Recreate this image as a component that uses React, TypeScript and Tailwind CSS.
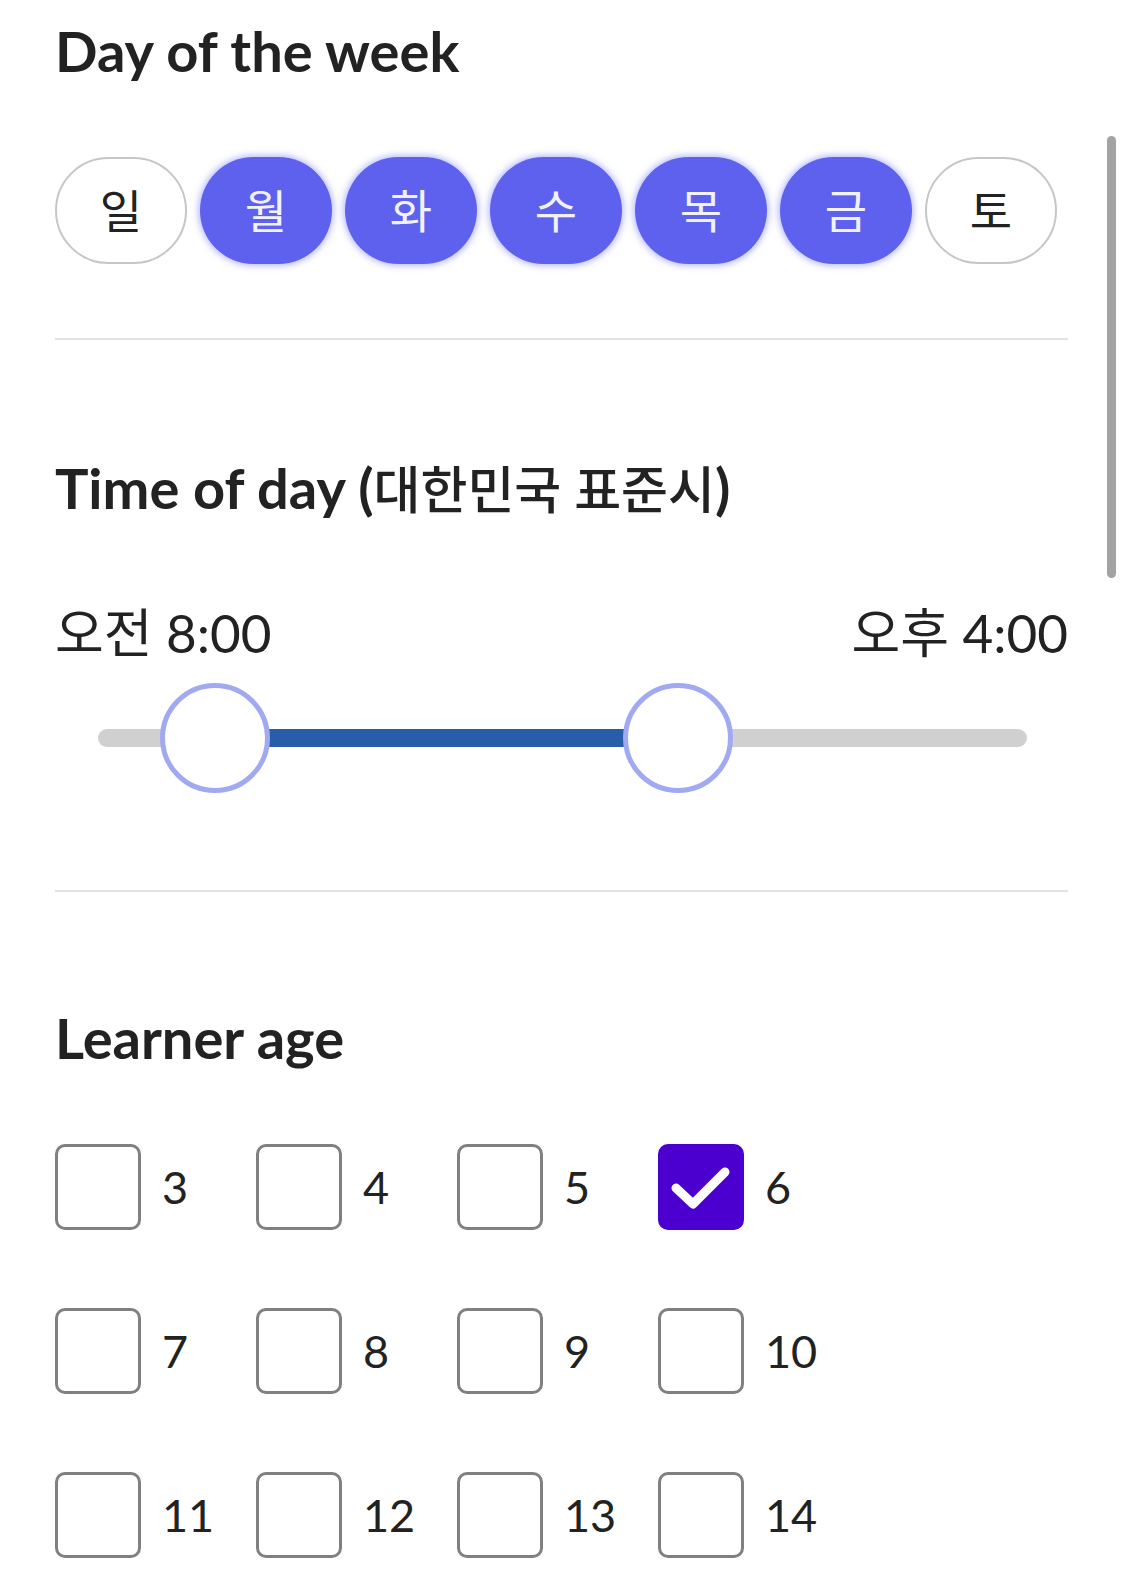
import React from "react";

const font = { fontFamily: '"Lato", "Noto Sans CJK KR", sans-serif' };

const days = [
  { d: "일", on: false },
  { d: "월", on: true },
  { d: "화", on: true },
  { d: "수", on: true },
  { d: "목", on: true },
  { d: "금", on: true },
  { d: "토", on: false },
];

const ages = [3, 4, 5, 6, 7, 8, 9, 10, 11, 12, 13, 14];

function Check({ checked }: { checked: boolean }) {
  if (checked) {
    return (
      <div className="w-[86px] h-[86px] rounded-[10px] bg-[#4b00cf] shrink-0">
        <svg width="86" height="86" viewBox="0 0 86 86">
          <path d="M18 44 L35 60 L67 28" fill="none" stroke="white" strokeWidth="9" strokeLinecap="round" strokeLinejoin="round" />
        </svg>
      </div>
    );
  }
  return <div className="w-[86px] h-[86px] rounded-[10px] border-[3px] border-[#808080] bg-white shrink-0" />;
}

export default function App() {
  return (
    <div className="relative w-[1125px] h-[1575px] bg-white overflow-hidden text-[#222222]" style={font}>
      <div className="pl-[55px] pr-[57px] pt-[23px]">
        <h2 className="text-[56px] font-bold leading-none">Day of the week</h2>

        <div className="mt-[78px] flex gap-[13px]">
          {days.map((x) =>
            x.on ? (
              <div
                key={x.d}
                className="w-[132px] h-[107px] rounded-full bg-[#5e61ee] shadow-[0_0_6px_2px_rgba(130,135,255,0.55)] flex items-center justify-center text-[46px] text-[#f2f2ff]"
              >
                {x.d}
              </div>
            ) : (
              <div
                key={x.d}
                className="w-[132px] h-[107px] rounded-full border-2 border-[#c6c6c6] bg-white flex items-center justify-center text-[46px] text-[#222222]"
              >
                {x.d}
              </div>
            )
          )}
        </div>

        <div className="mt-[74px] h-[2px] bg-[#e3e3e3]" />

        <h2 className="mt-[120px] text-[56px] font-bold leading-none">
          Time of day (<span className="font-medium text-[51px]">대한민국 표준시</span>)
        </h2>

        <div className="mt-[90px] flex justify-between text-[53px] leading-none">
          <span>오전 8:00</span>
          <span>오후 4:00</span>
        </div>

        <div className="mt-[24px] h-[110px] flex items-center pl-[43px] pr-[41px]">
          <div className="relative w-full h-[18px] rounded-full bg-[#d0d0d0]">
            <div className="absolute top-0 bottom-0 left-[117px] w-[463px] bg-[#285ea9]" />
            <div className="absolute top-[-46px] left-[62px] w-[110px] h-[110px] rounded-full border-[5px] border-[#a2a9f3] bg-white" />
            <div className="absolute top-[-46px] left-[525px] w-[110px] h-[110px] rounded-full border-[5px] border-[#a2a9f3] bg-white" />
          </div>
        </div>

        <div className="mt-[97px] h-[2px] bg-[#e3e3e3]" />

        <h2 className="mt-[118px] text-[56px] font-bold leading-none">Learner age</h2>

        <div className="mt-[78px] grid grid-cols-[201px_201px_201px_201px] gap-y-[78px]">
          {ages.map((a) => (
            <div key={a} className="flex items-center gap-[21px]">
              <Check checked={a === 6} />
              <span className="text-[45px] leading-none">{a}</span>
            </div>
          ))}
        </div>
      </div>

      <div className="absolute left-[1107px] top-[136px] w-[9px] h-[442px] rounded-full bg-[#a3a3a3]" />
    </div>
  );
}
